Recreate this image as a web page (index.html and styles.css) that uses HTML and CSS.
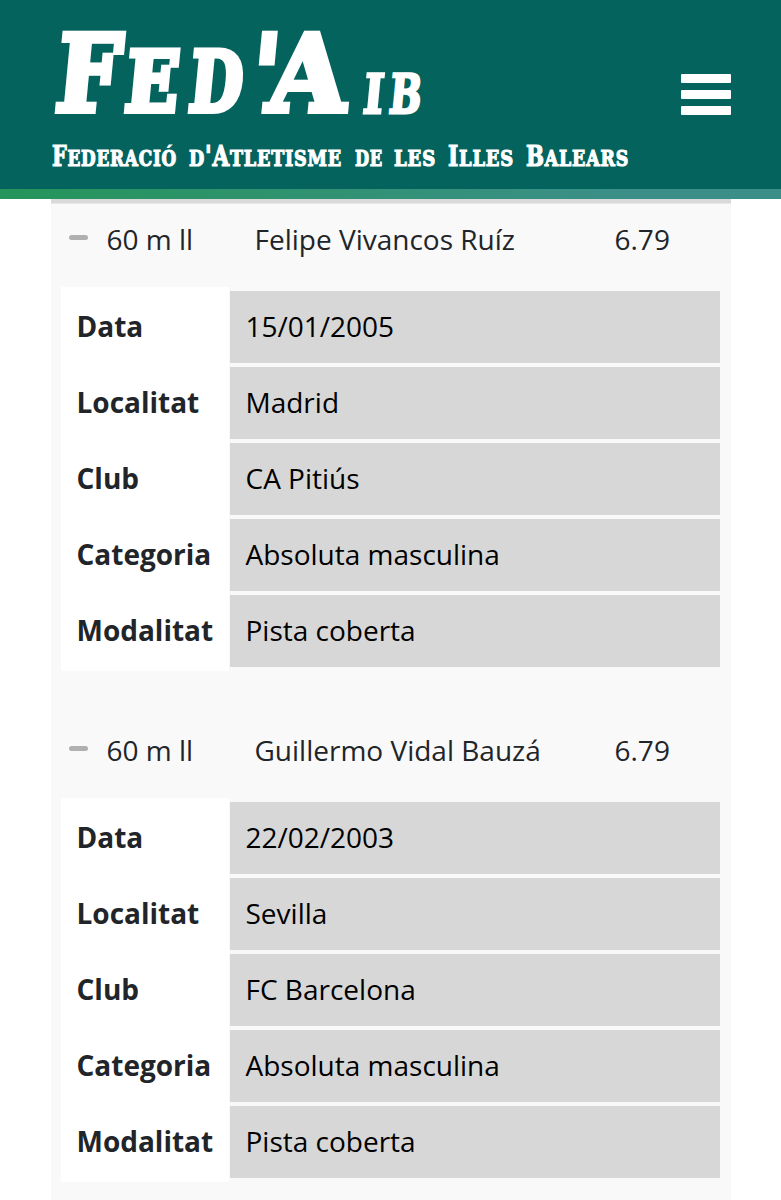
FILE: index.html
```html
<!DOCTYPE html>
<html lang="ca">
<head>
    <meta charset="UTF-8">
    <meta name="viewport" content="width=device-width, initial-scale=1.0">
    <title>Federació d'Atletisme de les Illes Balears</title>
    <link rel="stylesheet" href="styles.css">
</head>
<body>
    <header class="header">
        <svg class="logo" viewBox="0 0 600 180" width="600" height="180">
            <g class="logo-name" transform="translate(0 114) skewX(-5.5)">
                <text x="2" y="-3" font-size="106" textLength="64" lengthAdjust="spacingAndGlyphs">F</text>
                <text x="72" y="-3" font-size="83" textLength="53" lengthAdjust="spacingAndGlyphs">E</text>
                <text x="136" y="-3" font-size="83" textLength="53" lengthAdjust="spacingAndGlyphs">D</text>
                <text x="197" y="-3" font-size="106" textLength="28" lengthAdjust="spacingAndGlyphs">'</text>
                <text x="214" y="-3" font-size="106" textLength="79" lengthAdjust="spacingAndGlyphs">A</text>
                <text class="logo-ib" x="311" y="-1" font-size="54" textLength="20" lengthAdjust="spacingAndGlyphs">I</text>
                <text class="logo-ib" x="337" y="-1" font-size="54" textLength="32" lengthAdjust="spacingAndGlyphs">B</text>
            </g>
            <g class="logo-full">
                <text x="1" y="166" textLength="125" lengthAdjust="spacingAndGlyphs">F<tspan class="small">EDERACIÓ</tspan></text>
                <text x="138" y="166" textLength="153" lengthAdjust="spacingAndGlyphs"><tspan class="small">D</tspan>'A<tspan class="small">TLETISME</tspan></text>
                <text x="304" y="166" textLength="28" lengthAdjust="spacingAndGlyphs"><tspan class="small">DE</tspan></text>
                <text x="343" y="166" textLength="42" lengthAdjust="spacingAndGlyphs"><tspan class="small">LES</tspan></text>
                <text x="397" y="166" textLength="66" lengthAdjust="spacingAndGlyphs">I<tspan class="small">LLES</tspan></text>
                <text x="475" y="166" textLength="103" lengthAdjust="spacingAndGlyphs">B<tspan class="small">ALEARS</tspan></text>
            </g>
        </svg>
        <div class="menu">
            <span></span>
            <span></span>
            <span></span>
        </div>
    </header>

    <main class="records">
        <section class="record">
            <div class="summary">
                <i class="toggle"></i>
                <span class="event">60 m ll</span>
                <span class="athlete">Felipe Vivancos Ruíz</span>
                <span class="mark">6.79</span>
            </div>
            <dl class="details">
                <dt>Data</dt><dd>15/01/2005</dd>
                <dt>Localitat</dt><dd>Madrid</dd>
                <dt>Club</dt><dd>CA Pitiús</dd>
                <dt>Categoria</dt><dd>Absoluta masculina</dd>
                <dt>Modalitat</dt><dd>Pista coberta</dd>
            </dl>
        </section>
        <section class="record">
            <div class="summary">
                <i class="toggle"></i>
                <span class="event">60 m ll</span>
                <span class="athlete">Guillermo Vidal Bauzá</span>
                <span class="mark">6.79</span>
            </div>
            <dl class="details">
                <dt>Data</dt><dd>22/02/2003</dd>
                <dt>Localitat</dt><dd>Sevilla</dd>
                <dt>Club</dt><dd>FC Barcelona</dd>
                <dt>Categoria</dt><dd>Absoluta masculina</dd>
                <dt>Modalitat</dt><dd>Pista coberta</dd>
            </dl>
        </section>
    </main>
</body>
</html>
```
FILE: styles.css
```css
* {
    box-sizing: border-box;
}
body {
    margin: 0;
    height: 1200px;
    overflow: hidden;
    font-family: 'Open Sans', sans-serif;
    font-size: 28px;
    color: #212529;
    background: #fff;
}
.header {
    display: flex;
    justify-content: space-between;
    height: 199px;
    padding: 0 50px 0 51px;
    background: #05635e;
    border-bottom: 10px solid;
    border-image: linear-gradient(to right, #25955a, #3b8f88 80%) 1;
}
.logo {
    display: block;
    overflow: visible;
    fill: #fff;
    stroke: #fff;
    font-family: 'DejaVu Serif', serif;
    font-weight: bold;
}
.logo-name {
    stroke-width: 6px;
}
.logo-ib {
    stroke-width: 3px;
}
.logo-full {
    font-size: 27px;
    letter-spacing: 1px;
    stroke-width: 1.2px;
}
.logo-full .small {
    font-size: 22px;
}
.menu {
    display: flex;
    flex-direction: column;
    gap: 7px;
    padding-top: 74px;
}
.menu span {
    width: 50px;
    height: 9px;
    border-radius: 1px;
    background: #fff;
}
.records {
    width: 680px;
    height: 1001px;
    margin-left: 51px;
    padding: 4px 10px 0;
    overflow: hidden;
    background: linear-gradient(#d9d9d9 4px, #f9f9f9 5px);
}
.record {
    height: 511px;
}
.record:first-child {
    padding-top: 1px;
    height: 512px;
}
.summary {
    display: flex;
    align-items: center;
    height: 83px;
    padding: 0 0 13px 8px;
}
.toggle {
    width: 19px;
    height: 5px;
    margin: 0 18.5px 3px 0;
    border-radius: 3px;
    background: #b0b0b0;
}
.event {
    width: 148px;
}
.athlete {
    width: 360px;
}
.details {
    display: grid;
    grid-template-columns: 168px 490px;
    column-gap: 1px;
    margin: 0;
}
dt,
dd {
    height: 76px;
    margin: 0;
    padding-left: 15.5px;
    line-height: 71px;
}
dt {
    padding-top: 4px;
    font-weight: bold;
    background: #fff;
}
dt:nth-last-of-type(1) {
    height: 80px;
}
dd {
    height: 72px;
    margin-top: 4px;
    color: #000;
    background: #d7d7d7;
}
```
